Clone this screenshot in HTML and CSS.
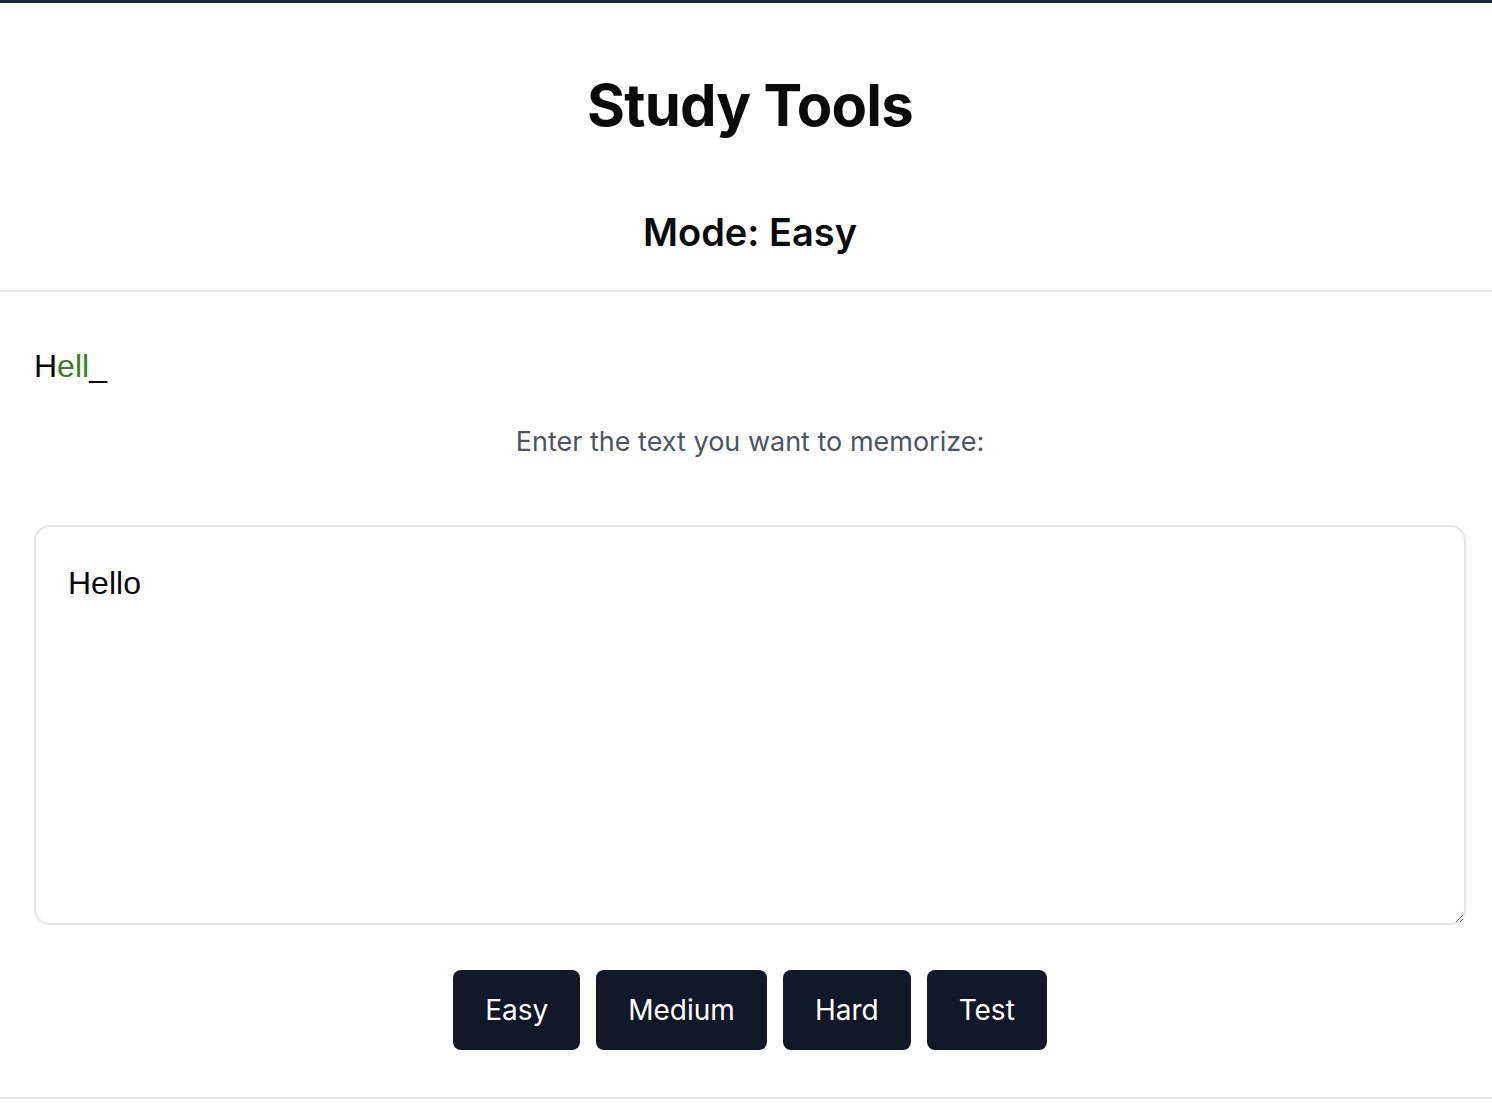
FILE: index.html
```html
<!DOCTYPE html>
<html lang="en">
<head>
<meta charset="utf-8">
<title>Study Tools</title>
<link rel="stylesheet" href="styles.css">
</head>
<body>
<div class="app">
  <header class="header">
    <h1 class="title">Study Tools</h1>
    <h2 class="mode">Mode: Easy</h2>
  </header>
  <main class="content">
    <p class="preview">H<span class="ok">ell</span>_</p>
    <p class="prompt">Enter the text you want to memorize:</p>
    <textarea class="input">Hello</textarea>
    <div class="buttons">
      <button class="btn">Easy</button>
      <button class="btn">Medium</button>
      <button class="btn">Hard</button>
      <button class="btn">Test</button>
    </div>
  </main>
</div>
</body>
</html>
```
FILE: styles.css
```css
html, body {
  margin: 0;
  padding: 0;
  background: #ffffff;
  overflow: hidden;
}
body {
  font-family: Inter, "Liberation Sans", sans-serif;
  color: #0a0a0a;
}
.app {
  width: 1500px;
  height: 1099px;
  box-sizing: border-box;
  border-top: 3px solid #1f2433;
  border-bottom: 2px solid #e2e2e2;
  box-shadow: 0 4px 8px rgba(0,0,0,0.04);
}
.header {
  text-align: center;
  padding-top: 72px;
  padding-bottom: 36px;
  border-bottom: 2px solid #e5e5e5;
}
.title {
  margin: 0;
  font-size: 58px;
  line-height: 60px;
  font-weight: 700;
  letter-spacing: -0.8px;
}
.mode {
  margin: 75px 0 0;
  font-size: 38px;
  line-height: 44px;
  font-weight: 600;
}
.content {
  padding: 54px 34px 0;
}
.preview {
  margin: 0;
  font-family: "Liberation Sans", Arial, sans-serif;
  font-size: 32px;
  line-height: 40px;
  color: #0a0a0a;
}
.ok {
  color: #3b7d23;
}
.prompt {
  margin: 38px 0 0;
  text-align: center;
  font-size: 27px;
  line-height: 36px;
  color: #4b5563;
}
.input {
  display: block;
  margin-top: 65px;
  width: 100%;
  height: 400px;
  box-sizing: border-box;
  border: 2px solid #e5e5e5;
  border-radius: 16px;
  padding: 36px 32px 32px;
  font-family: "Liberation Sans", Arial, sans-serif;
  font-size: 32px;
  line-height: 40px;
  color: #0a0a0a;
  resize: vertical;
  outline: none;
}
.buttons {
  display: flex;
  justify-content: center;
  gap: 16px;
  margin-top: 45px;
}
.btn {
  background: #111827;
  color: #ffffff;
  border: none;
  border-radius: 8px;
  padding: 24px 32px;
  font-family: Inter, sans-serif;
  font-size: 28px;
  line-height: 32px;
  font-weight: 400;
}
```
